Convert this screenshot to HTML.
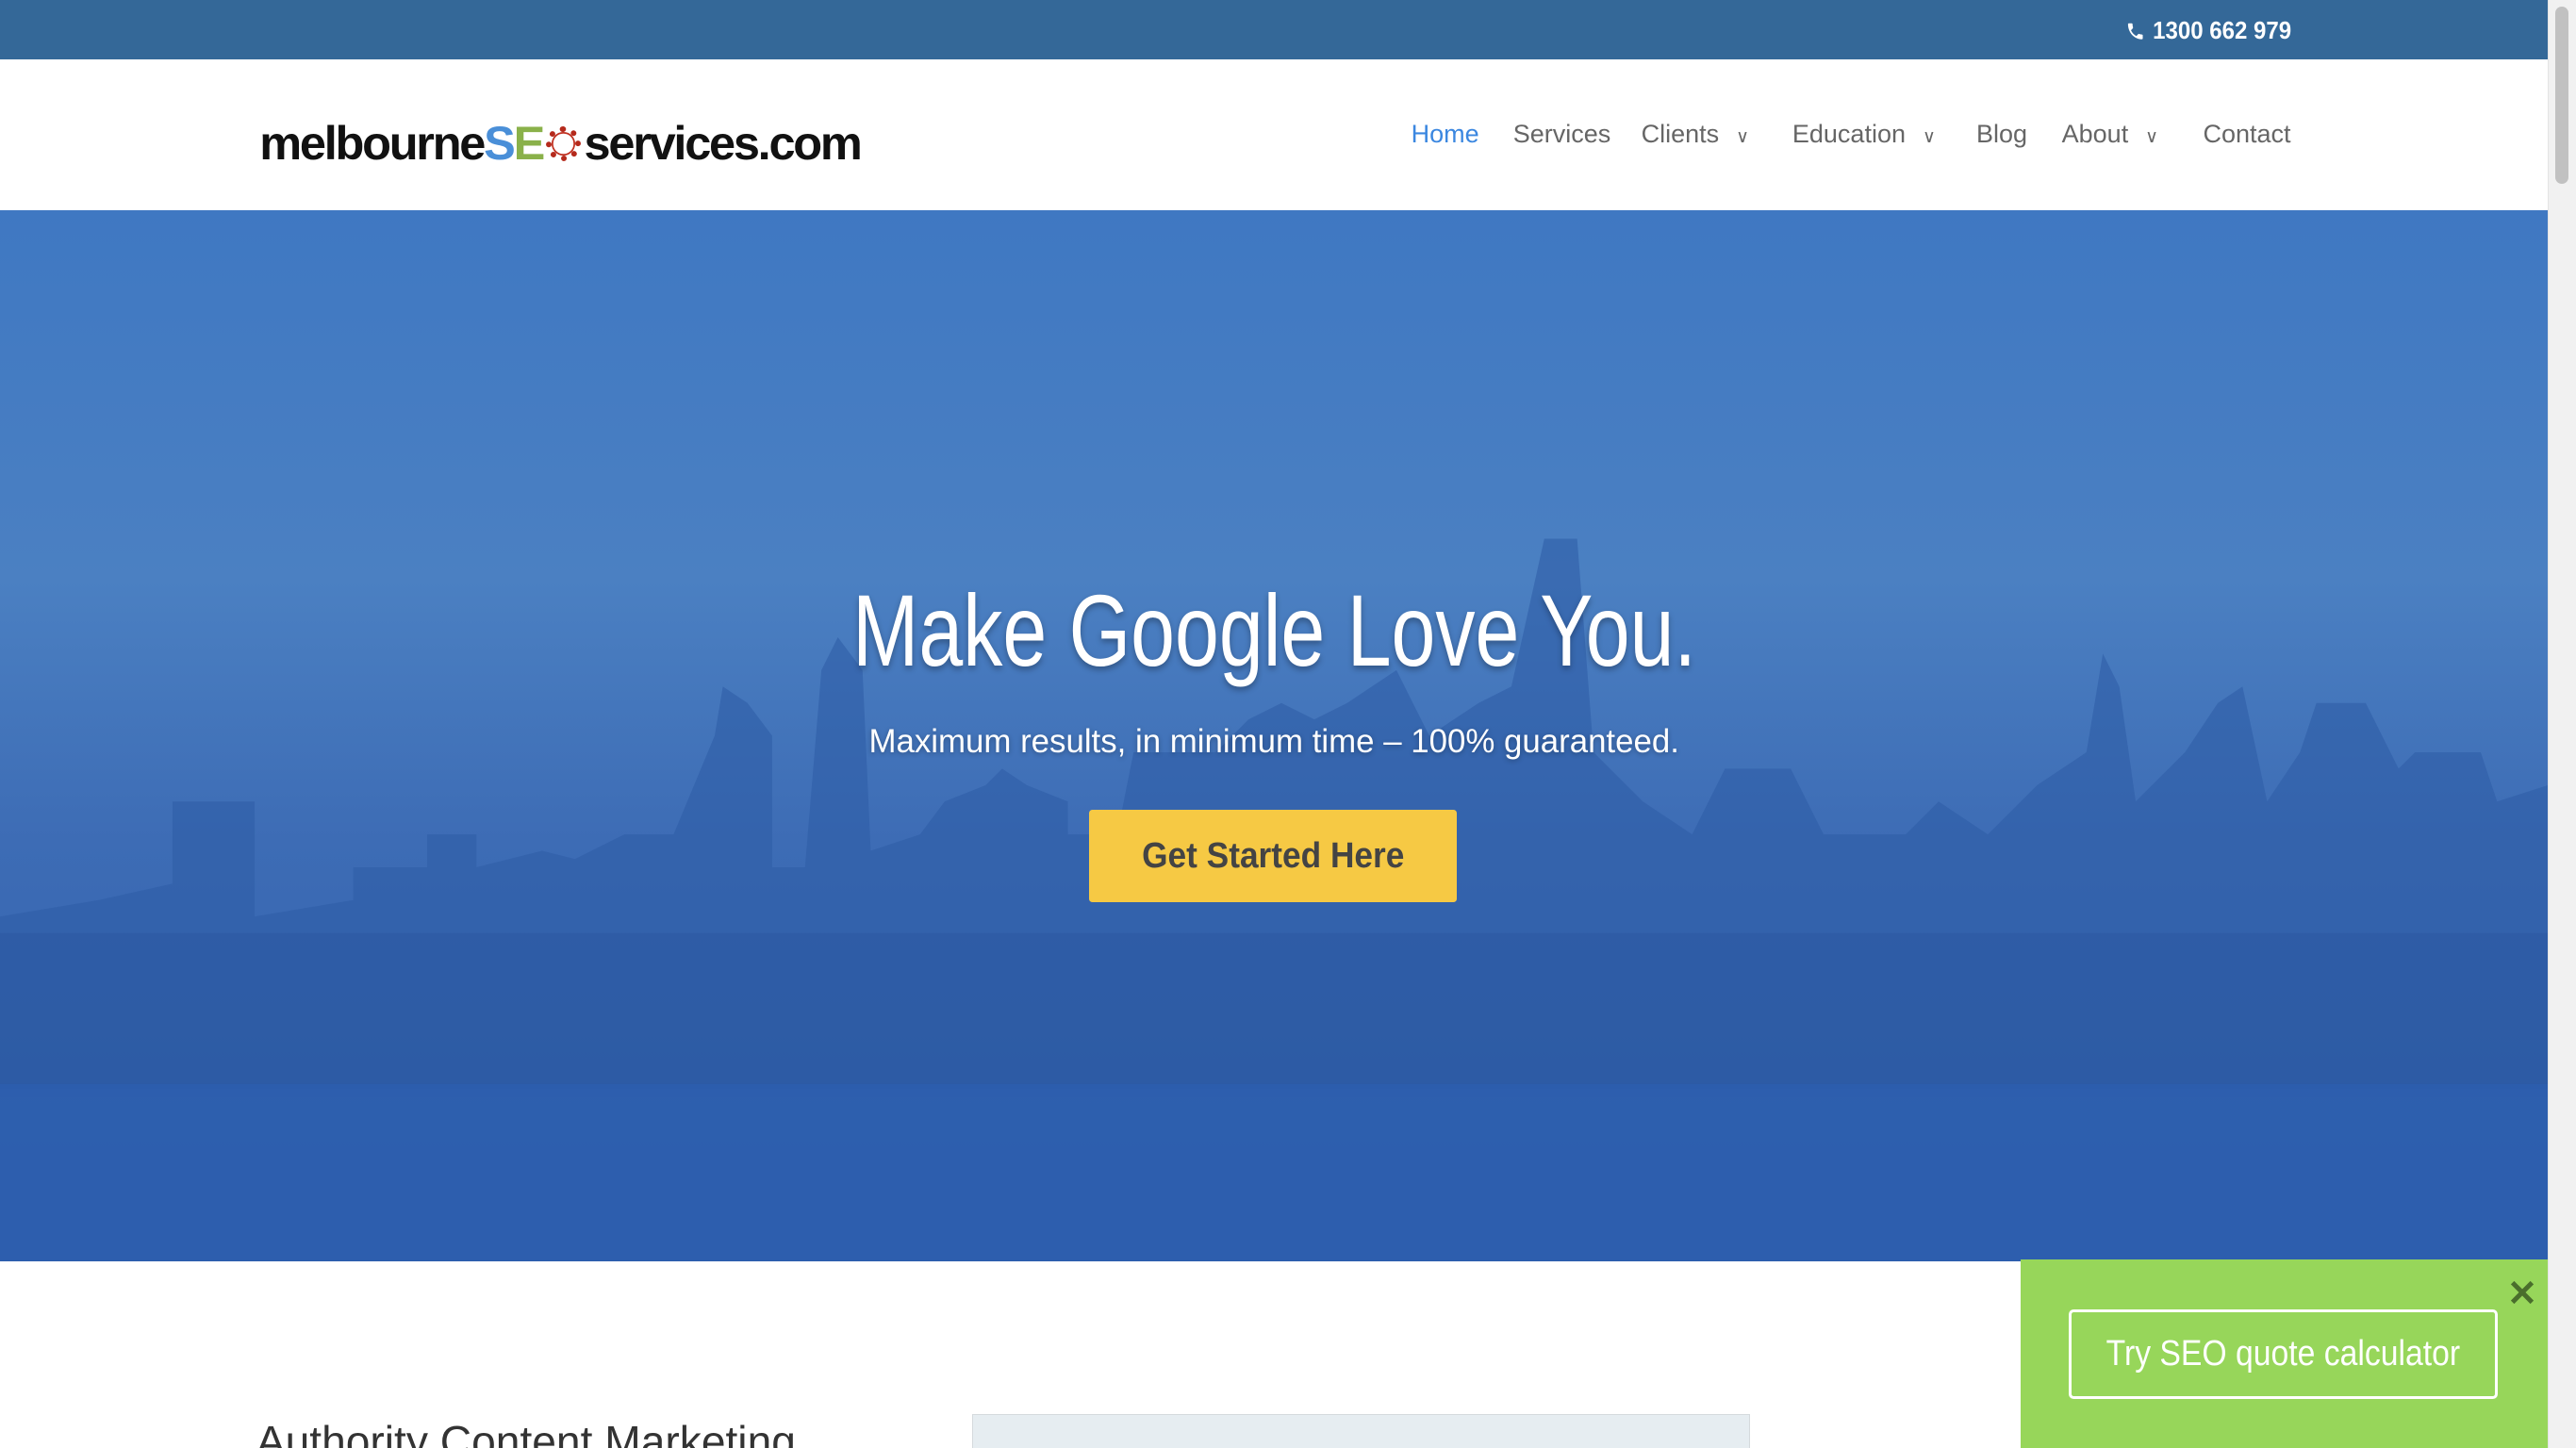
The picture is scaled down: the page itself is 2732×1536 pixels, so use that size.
<!DOCTYPE html>
<html><head><meta charset="utf-8">
<style>
html,body{margin:0;padding:0;width:2732px;height:1536px;overflow:hidden;background:#fff}
#w{width:1568px;height:882px;zoom:1.742347;position:relative;overflow:hidden;font-family:"Liberation Sans",sans-serif}
.top{position:absolute;left:0;top:0;width:1551px;height:36px;background:#346898}
.phone{position:absolute;right:156px;top:10px;color:#fff;font-weight:bold;font-size:15px;transform:scaleX(.92);transform-origin:right center}
.hdr{position:absolute;left:0;top:36px;width:1551px;height:92px;background:#fff}
.logo{position:absolute;left:158px;top:70px;font-size:29px;font-weight:bold;color:#111;letter-spacing:-1.3px;white-space:nowrap}
.nav{position:absolute;top:73px;font-size:15.5px;color:#666;white-space:nowrap}
.hero{position:absolute;left:0;top:128px;width:1551px;height:640px;background:linear-gradient(#3f78c2,#4b80c2 35%,#3d6cb5 60%,#2f5fae)}
.c{position:absolute;left:0;width:1551px;text-align:center}
.c span{display:inline-block;transform-origin:center}
h1{margin:0;top:220px;color:#fff;font-weight:normal;font-size:62px;text-shadow:0 2px 4px rgba(0,0,0,.3)}
h1 span{transform:scaleX(.78)}
.sub{top:312px;color:#fff;font-size:20px;text-shadow:0 1px 3px rgba(0,0,0,.3)}
.btn{position:absolute;left:663px;top:365px;width:224px;height:56px;background:#f6c944;border-radius:2px;color:#444;font-weight:bold;font-size:22px;text-align:center;line-height:56px}
.btn span{display:inline-block;transform:scaleX(.92)}
.sb{position:absolute;left:1551px;top:0;width:17px;height:882px;background:#f1f1f1;border-left:1px solid #e4e4e4}
.sb div{position:absolute;left:4px;top:4px;width:8px;height:108px;border-radius:4px;background:#c1c1c1}
.pop{position:absolute;left:1230px;top:767px;width:321px;height:115px;background:#97d65a}
.pop .b{position:absolute;left:29px;top:30px;width:258px;height:51px;border:2px solid #fff;border-radius:3px;color:#fff;font-size:22px;text-align:center;line-height:51px}
.pop .b span{display:inline-block;transform:scaleX(.88)}
.pop .x{position:absolute;left:296px;top:8px;font-size:22px;color:#4a6e2c;font-weight:bold}
.h2{position:absolute;left:156px;top:862px;font-size:26.5px;color:#333;white-space:nowrap}
.img{position:absolute;left:592px;top:861px;width:472px;height:30px;background:#e6edf1;border:1px solid #d5dadd}
</style></head><body><div id="w">
<div class="top"><div class="phone"><svg width="13" height="14" viewBox="0 0 24 24" style="vertical-align:-2px;margin-right:5px"><path fill="#fff" d="M6.6 10.8c1.4 2.8 3.8 5.1 6.6 6.6l2.2-2.2c.3-.3.7-.4 1-.2 1.1.4 2.3.6 3.6.6.6 0 1 .4 1 1V20c0 .6-.4 1-1 1C10.6 21 3 13.4 3 4c0-.6.4-1 1-1h3.5c.6 0 1 .4 1 1 0 1.3.2 2.5.6 3.6.1.3 0 .7-.2 1z"/></svg>1300 662 979</div></div>
<div class="hdr"></div>
<div class="logo">melbourne<span style="color:#4a8fd8">S</span><span style="color:#8ab14a">E</span><span style="display:inline-block;width:21px;height:21px;border:4px dotted #b52a1c;border-radius:50%;box-sizing:border-box;vertical-align:-1px;margin:0 2px;box-shadow:0 0 0 1px #c03020 inset"></span>services.com</div>
<div class="nav" style="left:859px;color:#3b87e0">Home</div>
<div class="nav" style="left:921px">Services</div>
<div class="nav" style="left:999px">Clients <span style="font-size:11px;margin-left:6px">&#8744;</span></div>
<div class="nav" style="left:1091px">Education <span style="font-size:11px;margin-left:6px">&#8744;</span></div>
<div class="nav" style="left:1203px">Blog</div>
<div class="nav" style="left:1255px">About <span style="font-size:11px;margin-left:6px">&#8744;</span></div>
<div class="nav" style="left:1341px">Contact</div>
<div class="hero">
<svg width="1551" height="640" style="position:absolute;left:0;top:0">
<g fill="#2f5ea6" opacity=".6">
<path d="M0 430 L60 420 L105 410 L105 360 L155 360 L155 430 L215 420 L215 400 L260 400 L260 380 L290 380 L290 400 L330 390 L350 395 L380 380 L410 380 L435 320 L440 290 L455 300 L470 320 L470 400 L490 400 L500 280 L510 260 L525 280 L530 390 L560 380 L575 360 L600 350 L610 340 L625 350 L650 360 L650 380 L680 380 L690 330 L740 330 L760 310 L780 300 L800 310 L820 300 L850 280 L870 320 L900 300 L920 290 L940 200 L960 200 L970 330 L1000 360 L1030 380 L1050 340 L1090 340 L1110 380 L1160 380 L1180 360 L1210 380 L1240 350 L1270 330 L1280 270 L1290 290 L1300 360 L1330 330 L1350 300 L1365 290 L1380 360 L1400 330 L1410 300 L1440 300 L1460 340 L1470 330 L1510 330 L1520 360 L1551 350 L1551 540 L0 540Z"/>
</g>
<rect x="0" y="440" width="1551" height="95" fill="#28549a" opacity=".35"/>
<rect x="0" y="532" width="1551" height="108" fill="#2d5eae" opacity=".85"/>
</svg>
<h1 class="c"><span>Make Google Love You.</span></h1>
<div class="c sub"><span>Maximum results, in minimum time – 100% guaranteed.</span></div>
<div class="btn"><span>Get Started Here</span></div>
</div>
<div class="h2">Authority Content Marketing</div>
<div class="img"></div>
<div class="pop"><div class="x">✕</div><div class="b"><span>Try SEO quote calculator</span></div></div>
<div class="sb"><div></div></div>
</div></body></html>
